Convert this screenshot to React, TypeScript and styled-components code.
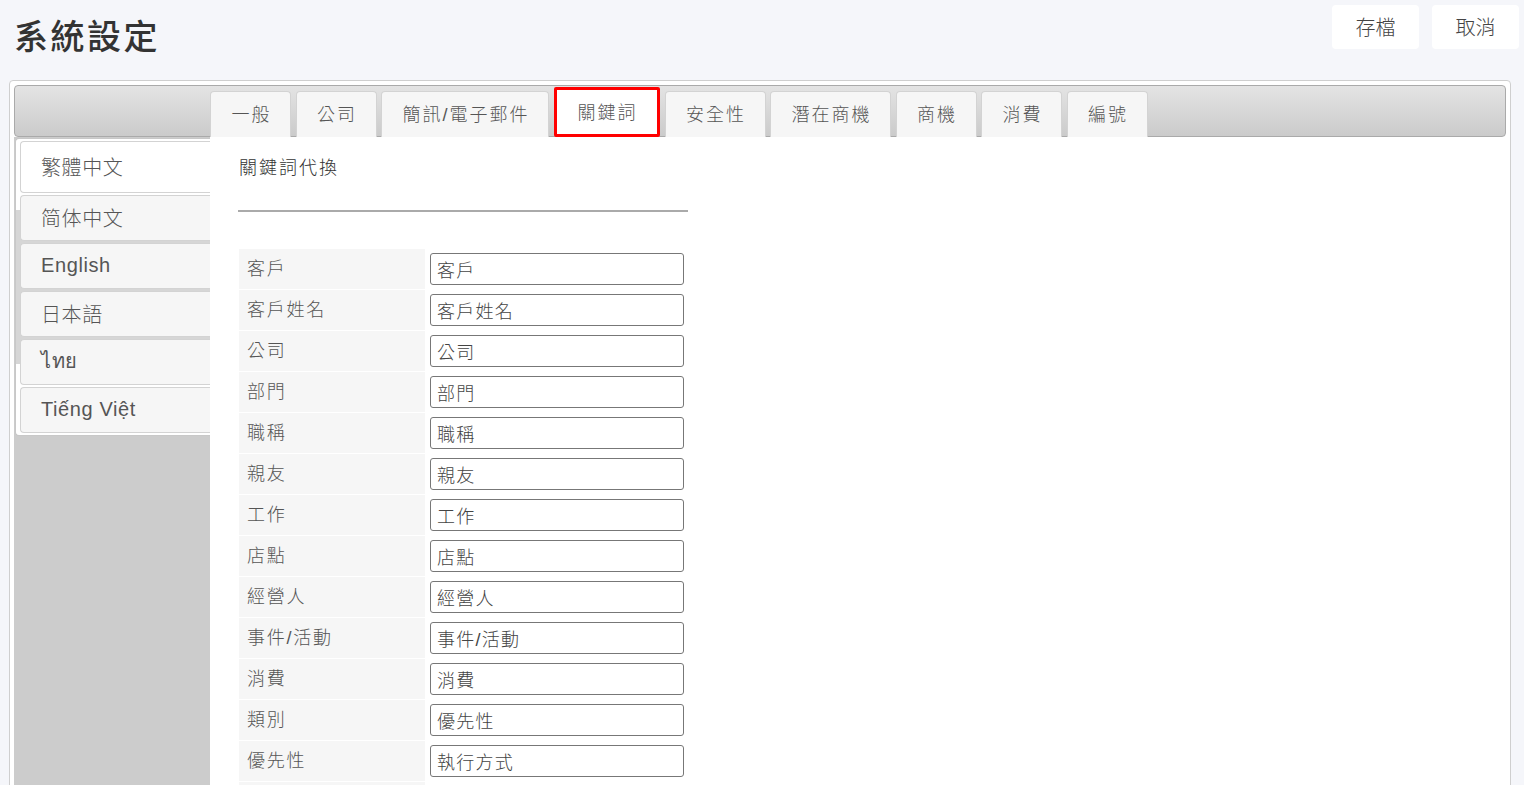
import styled, { createGlobalStyle } from "styled-components"

const GlobalStyle = createGlobalStyle`
    html, body {
        margin: 0;
        padding: 0;
        background: #f5f6fa;
        overflow: hidden;
        font-family: "Liberation Sans", "Noto Sans CJK TC", sans-serif;
        color: #555;
    }
`

const StyledHeader = styled.div`
    display: flex;
    align-items: flex-start;
    justify-content: space-between;
    height: 80px;
    padding: 5px 5px 0 14px;
    box-sizing: border-box;
`

const StyledTitle = styled.h1`
    margin: 7px 0 0;
    font-size: 34px;
    line-height: 50px;
    font-weight: 500;
    color: #333;
    letter-spacing: 2.5px;
`

const StyledActions = styled.div`
    display: flex;
    gap: 13px;
`

const StyledButton = styled.button`
    width: 87px;
    height: 44px;
    padding: 0 0 2px;
    border: none;
    border-radius: 4px;
    background: #fff;
    font-family: inherit;
    font-size: 20px;
    font-weight: 300;
    color: #444;
    cursor: pointer;
`

const StyledContainer = styled.div`
    margin: 0 13px 0 9px;
    padding: 4px 4px 0;
    background: #fff;
    border: 1px solid #cfcfcf;
    border-radius: 4px;
    height: 720px;
    box-sizing: border-box;
    display: flex;
    flex-direction: column;
`

const StyledTabBar = styled.div`
    display: flex;
    align-items: flex-end;
    gap: 4.5px;
    height: 52px;
    padding: 0 0 0 195px;
    box-sizing: border-box;
    border: 1px solid #aaa;
    border-radius: 4px;
    background: linear-gradient(#e4e4e4, #cbcbcb);
`

const StyledTab = styled.div<{ $active?: boolean }>`
    display: flex;
    align-items: center;
    justify-content: center;
    height: ${p => (p.$active ? "50px" : "46px")};
    margin-bottom: -1px;
    padding: 0 ${p => (p.$active ? "19.5px" : "18.5px")} 3px ${p => (p.$active ? "21px" : "20.5px")};
    box-sizing: border-box;
    border: ${p => (p.$active ? "3px solid #f00" : "1px solid #d3d3d3")};
    border-bottom: ${p => (p.$active ? "3px solid #f00" : "none")};
    border-radius: ${p => (p.$active ? "2px" : "4px 4px 0 0")};
    background: ${p => (p.$active ? "#fff" : "#f6f6f6")};
    font-size: 18px;
    font-weight: 300;
    letter-spacing: 2px;
    color: #555;
    white-space: nowrap;
`

const StyledBody = styled.div`
    display: flex;
    flex: 1;
    min-height: 0;
`

const StyledSide = styled.div`
    width: 196px;
    flex: none;
    background: #cccccc;
    padding-top: 1px;
`

const StyledSideNav = styled.div`
    display: flex;
    flex-direction: column;
    gap: 2px;
    margin-left: 1px;
    padding: 2px 0 2px 4px;
    border: 1px solid #c8c8c8;
    border-right: none;
    border-radius: 4px 0 0 4px;
    background: linear-gradient(#fff 0 24%, #d6d6d6 24% 76%, #fff 76%);
`

const StyledSideTab = styled.div<{ $active?: boolean }>`
    display: flex;
    align-items: center;
    height: ${p => (p.$active ? "52px" : "46px")};
    padding: 0 0 2px 20px;
    box-sizing: border-box;
    border: 1px solid #d3d3d3;
    border-right: none;
    border-radius: 4px 0 0 4px;
    background: ${p => (p.$active ? "#fff" : "#f6f6f6")};
    font-size: 20px;
    font-weight: 300;
    letter-spacing: 0.6px;
    color: #555;
`

const StyledPanel = styled.div`
    flex: 1;
    padding: 18px 0 0 28px;
    background: #fff;
`

const StyledHeading = styled.div`
    width: 450px;
    padding: 0 0 0 1px;
    height: 57px;
    border-bottom: 2px solid #aaa;
    font-size: 18px;
    font-weight: 300;
    letter-spacing: 2px;
    color: #333;
    line-height: 26px;
    box-sizing: border-box;
`

const StyledTable = styled.div`
    display: grid;
    grid-template-columns: 186px 258px;
    column-gap: 5px;
    row-gap: 1px;
    width: 450px;
    margin-top: 37px;
    padding-left: 1px;
`

const StyledLabel = styled.div`
    height: 40px;
    padding: 7px 0 0 8px;
    box-sizing: border-box;
    background: #f6f6f6;
    font-size: 18px;
    font-weight: 300;
    letter-spacing: 1.75px;
    color: #555;
    line-height: 26px;
`

const StyledCell = styled.div`
    display: flex;
    align-items: center;
`

const StyledInput = styled.input`
    width: 254px;
    height: 32px;
    box-sizing: border-box;
    padding: 0 0 1px 6px;
    border: 1px solid #777;
    border-radius: 3px;
    font-family: inherit;
    font-size: 18px;
    font-weight: 300;
    letter-spacing: 1.25px;
    color: #444;
    outline: none;
`

const tabs = ["一般", "公司", "簡訊/電子郵件", "關鍵詞", "安全性", "潛在商機", "商機", "消費", "編號"]

const languages = ["繁體中文", "简体中文", "English", "日本語", "ไทย", "Tiếng Việt"]

const keywords: [string, string][] = [
    ["客戶", "客戶"],
    ["客戶姓名", "客戶姓名"],
    ["公司", "公司"],
    ["部門", "部門"],
    ["職稱", "職稱"],
    ["親友", "親友"],
    ["工作", "工作"],
    ["店點", "店點"],
    ["經營人", "經營人"],
    ["事件/活動", "事件/活動"],
    ["消費", "消費"],
    ["類別", "優先性"],
    ["優先性", "執行方式"],
    ["執行方式", "類別"],
]

function App() {
    return (
        <>
            <GlobalStyle />
            <StyledHeader>
                <StyledTitle>系統設定</StyledTitle>
                <StyledActions>
                    <StyledButton>存檔</StyledButton>
                    <StyledButton>取消</StyledButton>
                </StyledActions>
            </StyledHeader>
            <StyledContainer>
                <StyledTabBar>
                    {tabs.map(t => (
                        <StyledTab key={t} $active={t === "關鍵詞"}>{t}</StyledTab>
                    ))}
                </StyledTabBar>
                <StyledBody>
                    <StyledSide>
                        <StyledSideNav>
                            {languages.map((l, i) => (
                                <StyledSideTab key={l} $active={i === 0}>{l}</StyledSideTab>
                            ))}
                        </StyledSideNav>
                    </StyledSide>
                    <StyledPanel>
                        <StyledHeading>關鍵詞代換</StyledHeading>
                        <StyledTable>
                            {keywords.map(([label, value]) => (
                                <>
                                    <StyledLabel key={label + "-l"}>{label}</StyledLabel>
                                    <StyledCell key={label + "-c"}>
                                        <StyledInput defaultValue={value} />
                                    </StyledCell>
                                </>
                            ))}
                        </StyledTable>
                    </StyledPanel>
                </StyledBody>
            </StyledContainer>
        </>
    )
}

export default App
